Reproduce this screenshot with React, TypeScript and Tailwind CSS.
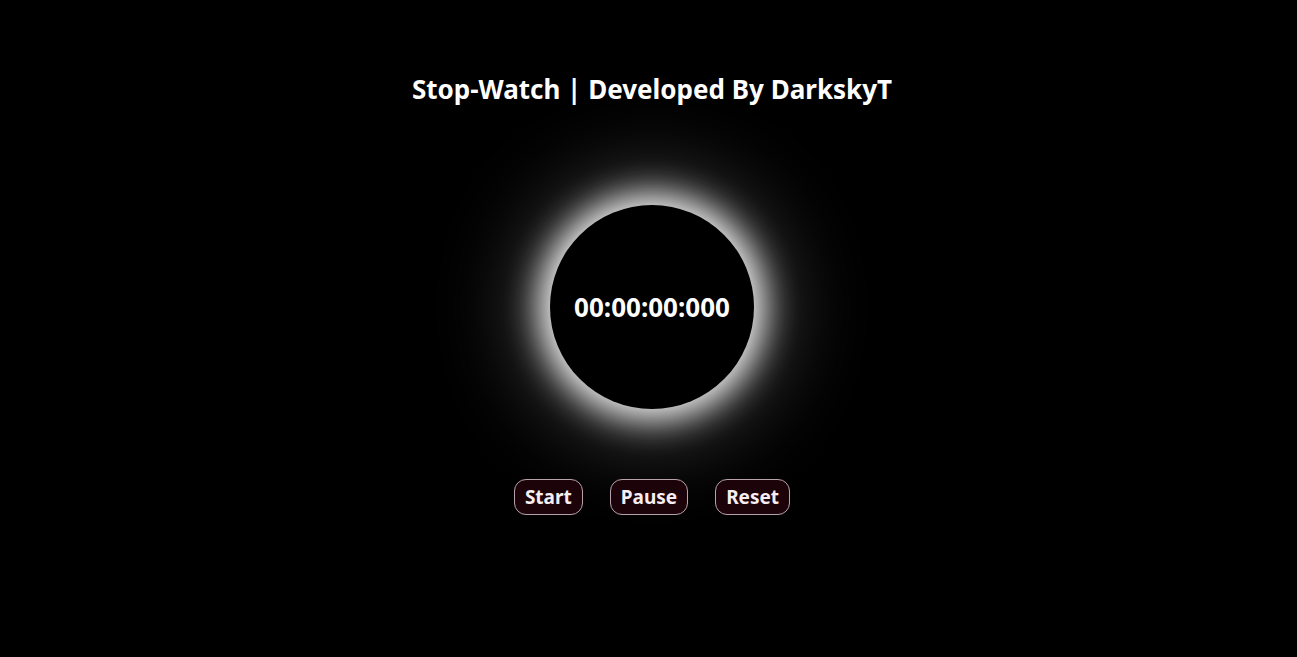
import React, { useEffect, useRef, useState } from "react";

const pad = (n: number, len = 2) => n.toString().padStart(len, "0");

const format = (ms: number) => {
  const h = Math.floor(ms / 3600000);
  const m = Math.floor((ms % 3600000) / 60000);
  const s = Math.floor((ms % 60000) / 1000);
  return `${pad(h)}:${pad(m)}:${pad(s)}:${pad(ms % 1000, 3)}`;
};

const App = () => {
  const [elapsed, setElapsed] = useState(0);
  const [running, setRunning] = useState(false);
  const startRef = useRef(0);

  useEffect(() => {
    if (!running) return;
    startRef.current = Date.now() - elapsed;
    const id = setInterval(() => setElapsed(Date.now() - startRef.current), 10);
    return () => clearInterval(id);
    // eslint-disable-next-line react-hooks/exhaustive-deps
  }, [running]);

  const btn =
    "h-9 px-[10px] rounded-xl border border-[#b9a3ab] bg-[#1c0309] text-[#f6eef2] text-[19px] font-bold leading-none";

  return (
    <div className="min-h-screen w-full bg-black flex flex-col items-center pl-[7px] font-['Noto_Sans',sans-serif] text-white">
      <h1 className="mt-[71px] text-[26px] font-bold leading-9">Stop-Watch | Developed By DarkskyT</h1>

      <div className="mt-[98px] w-[204px] h-[204px] rounded-full bg-black flex items-center justify-center shadow-[0_0_34px_10px_rgba(255,255,255,0.95),0_0_90px_24px_rgba(255,255,255,0.3)]">
        <span className="text-[26px] font-bold">{format(elapsed)}</span>
      </div>

      <div className="mt-[70px] flex gap-[27px]">
        <button className={btn} onClick={() => setRunning(true)}>Start</button>
        <button className={btn} onClick={() => setRunning(false)}>Pause</button>
        <button
          className={btn}
          onClick={() => {
            setRunning(false);
            setElapsed(0);
          }}
        >
          Reset
        </button>
      </div>
    </div>
  );
};

export default App;
